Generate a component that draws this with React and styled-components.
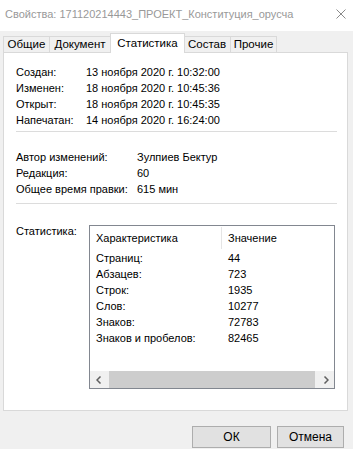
import styled, { createGlobalStyle } from 'styled-components';

const GlobalStyle = createGlobalStyle`
	html, body {
		margin: 0;
		padding: 0;
		background: #f0f0f0;
	}
	* {
		box-sizing: border-box;
	}
`;

const tabs = [
	['Общие', 47],
	['Документ', 61],
	['Статистика', 75],
	['Состав', 47],
	['Прочие', 46],
];

const dates = [
	['Создан:', '13 ноября 2020 г. 10:32:00'],
	['Изменен:', '18 ноября 2020 г. 10:45:36'],
	['Открыт:', '18 ноября 2020 г. 10:45:35'],
	['Напечатан:', '14 ноября 2020 г. 16:24:00'],
];

const edits = [
	['Автор изменений:', 'Зулпиев Бектур'],
	['Редакция:', '60'],
	['Общее время правки:', '615 мин'],
];

const stats = [
	['Страниц:', '44'],
	['Абзацев:', '723'],
	['Строк:', '1935'],
	['Слов:', '10277'],
	['Знаков:', '72783'],
	['Знаков и пробелов:', '82465'],
];

export default function App() {
	return (
		<>
			<GlobalStyle />
			<Window>
				<TitleBar>
					<Title>Свойства: 171120214443_ПРОЕКТ_Конституция_орусча</Title>
					<svg width="10" height="10" viewBox="0 0 10 10">
						<path d="M0.5 0.5 L9.5 9.5 M9.5 0.5 L0.5 9.5" stroke="#8a8a8a" strokeWidth="1" />
					</svg>
				</TitleBar>

				<Body>
					<TabRow>
						{tabs.map(([t, w]) => (
							<Tab key={t} width={w} active={t === 'Статистика'}>{t}</Tab>
						))}
					</TabRow>

					<Panel>
						<InfoGrid labelWidth={70}>
							{dates.map(([l, v]) => (
								<Row key={l}><span>{l}</span><span>{v}</span></Row>
							))}
						</InfoGrid>
						<Divider top={3} />

						<InfoGrid labelWidth={121} gapTop={17}>
							{edits.map(([l, v]) => (
								<Row key={l}><span>{l}</span><span>{v}</span></Row>
							))}
						</InfoGrid>
						<Divider top={6} />

						<StatsSection>
							<StatsLabel>Статистика:</StatsLabel>
							<ListView>
								<ListHeader>
									<HeaderCell>Характеристика</HeaderCell>
									<HeaderCell>Значение</HeaderCell>
								</ListHeader>
								<ListBody>
									{stats.map(([l, v]) => (
										<ListRow key={l}><span>{l}</span><span>{v}</span></ListRow>
									))}
								</ListBody>
								<ScrollBar>
									<Arrow>
										<svg width="6" height="8" viewBox="0 0 6 8">
											<path d="M4.5 0.5 L1 4 L4.5 7.5" stroke="#606060" strokeWidth="1.5" fill="none" />
										</svg>
									</Arrow>
									<Thumb />
									<Arrow>
										<svg width="6" height="8" viewBox="0 0 6 8">
											<path d="M1.5 0.5 L5 4 L1.5 7.5" stroke="#606060" strokeWidth="1.5" fill="none" />
										</svg>
									</Arrow>
								</ScrollBar>
							</ListView>
						</StatsSection>
					</Panel>

					<Buttons>
						<Button width={79}>ОК</Button>
						<Button width={67}>Отмена</Button>
					</Buttons>
				</Body>
			</Window>
		</>
	);
}

// STYLES

const Window = styled.div`
	width: 353px;
	height: 449px;
	background: #f0f0f0;
	display: flex;
	flex-direction: column;
	font-family: "Liberation Sans", Arial, sans-serif;
	color: #000;
	overflow: hidden;
`;

const TitleBar = styled.div`
	height: 31px;
	background: #fff;
	display: flex;
	align-items: center;
	justify-content: space-between;
	padding: 0 7px 3px 5px;
`;

const Title = styled.div`
	font-size: 11px;
	color: #999;
	white-space: nowrap;
`;

const Body = styled.div`
	display: flex;
	flex-direction: column;
	padding: 2px 5px 0 3px;
`;

const TabRow = styled.div`
	display: flex;
	align-items: flex-end;
	height: 20px;
	position: relative;
	z-index: 1;
	margin-bottom: -1px;
`;

const Tab = styled.div`
	width: ${({width}) => width}px;
	height: ${({active}) => active ? '20px' : '17px'};
	margin: 0 ${({active}) => active ? '-1px' : '0'};
	border: 1px solid #d9d9d9;
	border-bottom: ${({active}) => active ? 'none' : '1px solid #d9d9d9'};
	border-left-width: ${({active}) => active ? '1px' : '0'};
	background: ${({active}) => active ? '#fff' : '#f0f0f0'};
	font-size: 11.5px;
	line-height: ${({active}) => active ? '19px' : '15px'};
	text-align: center;
	white-space: nowrap;
	position: relative;
	z-index: ${({active}) => active ? 2 : 1};
	&:first-child {
		border-left-width: 1px;
	}
`;

const Panel = styled.div`
	height: 359px;
	background: #fff;
	border: 1px solid #d9d9d9;
	padding: 11px 10px 0 12px;
	display: flex;
	flex-direction: column;
	font-size: 11px;
`;

const InfoGrid = styled.div`
	display: grid;
	grid-template-columns: ${({labelWidth}) => labelWidth}px 1fr;
	margin-top: ${({gapTop}) => gapTop || 0}px;
`;

const Row = styled.div`
	display: contents;
	span {
		line-height: 16px;
		white-space: nowrap;
	}
`;

const Divider = styled.div`
	height: 1px;
	background: #dcdcdc;
	margin-top: ${({top}) => top}px;
`;

const StatsSection = styled.div`
	display: flex;
	margin-top: 21px;
`;

const StatsLabel = styled.div`
	width: 73px;
	line-height: 16px;
	margin-top: -2px;
`;

const ListView = styled.div`
	width: 246px;
	height: 164px;
	border: 1px solid #828790;
	display: flex;
	flex-direction: column;
`;

const ListHeader = styled.div`
	display: grid;
	grid-template-columns: 132px 1fr;
	height: 24px;
	align-items: center;
`;

const HeaderCell = styled.div`
	padding-left: 6px;
	height: 22px;
	line-height: 22px;
	&:first-child {
		border-right: 1px solid #e5e5e5;
	}
`;

const ListBody = styled.div`
	flex: 1;
`;

const ListRow = styled.div`
	display: grid;
	grid-template-columns: 132px 1fr;
	padding-left: 6px;
	line-height: 16px;
	white-space: nowrap;
`;

const ScrollBar = styled.div`
	height: 17px;
	background: #f0f0f0;
	display: flex;
	align-items: stretch;
`;

const Arrow = styled.div`
	width: 17px;
	display: flex;
	align-items: center;
	justify-content: center;
`;

const Thumb = styled.div`
	flex: 1;
	margin: 0 2px;
	background: #cdcdcd;
`;

const Buttons = styled.div`
	display: flex;
	justify-content: flex-end;
	gap: 6px;
	margin-top: 15px;
	padding-right: 4px;
`;

const Button = styled.div`
	width: ${({width}) => width}px;
	height: 22px;
	background: #e1e1e1;
	border: 1px solid #adadad;
	font-size: 12px;
	line-height: 20px;
	text-align: center;
`;
